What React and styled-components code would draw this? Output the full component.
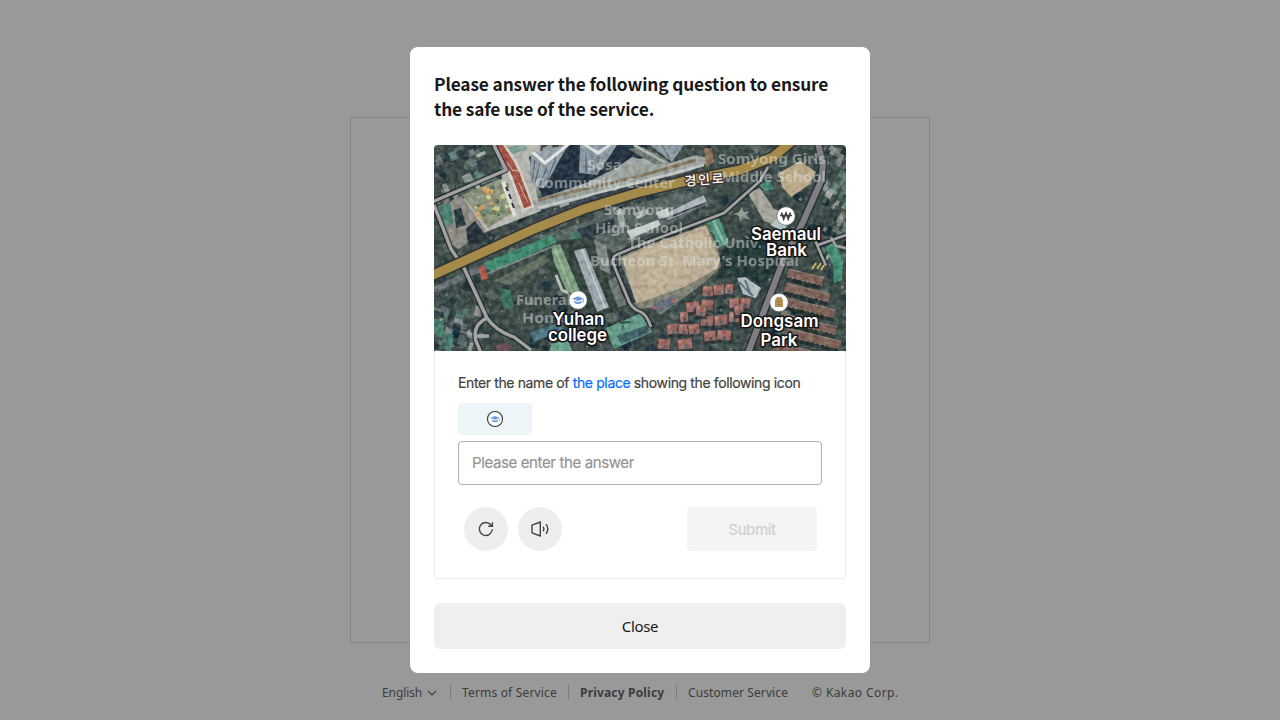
import React from 'react';
import styled, { createGlobalStyle } from 'styled-components';

const Global = createGlobalStyle`
  * { box-sizing: border-box; }
  body { margin: 0; background: #fff; overflow: hidden; }
  button, input { font: inherit; margin: 0; padding: 0; border: 0; }
`;

const Page = styled.div`
  height: 100vh;
  padding-top: 117px;
  display: flex;
  flex-direction: column;
  align-items: center;
  font-family: 'Noto Sans', 'Noto Sans CJK KR', sans-serif;
`;
const LoginCard = styled.main`
  width: 580px;
  height: 526px;
  border: 1px solid #ddd;
`;
const Footer = styled.footer`
  width: 516px;
  margin-top: 40px;
  height: 20px;
  display: flex;
  align-items: center;
  color: #666;
  font-size: 12px;
  line-height: 20px;
  white-space: nowrap;
`;
const FooterItem = styled.span`
  width: ${(p) => p.$w}px;
  margin-left: ${(p) => p.$gap || 0}px;
  font-weight: ${(p) => (p.$bold ? 700 : 400)};
  letter-spacing: ${(p) => p.$ls || 0}px;
  flex: none;
`;
const Divider = styled.i`
  width: 1px;
  height: 14px;
  margin: -2px 11px 0;
  background: #ccc;
  flex: none;
`;
const Chevron = styled.svg`
  width: 12px;
  height: 12px;
  margin-right: 1px;
  flex: none;
  fill: none;
  stroke: #666;
  stroke-width: 1.2;
`;

const Dim = styled.div`
  position: fixed;
  inset: 0;
  background: rgba(0, 0, 0, 0.4);
  display: flex;
  align-items: center;
  justify-content: center;
`;
const Dialog = styled.section`
  width: 460px;
  height: 626px;
  padding: 24px;
  background: #fff;
  border-radius: 8px;
`;
const Title = styled.h1`
  margin: 0;
  height: 74px;
  font: 700 17.3px/25px 'Noto Sans CJK KR', sans-serif;
  letter-spacing: -0.135px;
  color: #191919;
  white-space: nowrap;
`;
const Challenge = styled.div`
  height: 434px;
  border-radius: 4px;
  box-shadow: inset 0 0 0 1px #eee;
  overflow: hidden;
  font-family: Inter, sans-serif;
`;
const MapArt = styled.svg`
  display: block;
  width: 412px;
  height: 206px;
`;
const Form = styled.div`
  padding: 22px 24px 0;
`;
const Prompt = styled.p`
  margin: 0;
  font-size: 14px;
  line-height: 20px;
  letter-spacing: -0.375px;
  color: #424242;
  white-space: nowrap;
  -webkit-text-stroke: 0.2px currentColor;
`;
const Accent = styled.span`
  color: #0a6cff;
`;
const IconChip = styled.div`
  width: 74px;
  height: 32px;
  margin: 10px 0 6px;
  border-radius: 4px;
  background: #edf5f9;
  display: grid;
  place-items: center;
`;
const Answer = styled.input`
  display: block;
  width: 364px;
  height: 44px;
  padding: 0 13px 1px;
  border: 1px solid #b0b0b0;
  border-radius: 4px;
  font-size: 15px;
  letter-spacing: -0.38px;
  outline: 0;
  &::placeholder { color: #949494; opacity: 1; -webkit-text-stroke: 0.2px #949494; }
`;
const Actions = styled.div`
  display: flex;
  gap: 10px;
  padding: 22px 5px 0 6px;
`;
const RoundButton = styled.button`
  width: 44px;
  height: 44px;
  border-radius: 50%;
  background: #eee;
  display: grid;
  place-items: center;
`;
const Submit = styled.button`
  width: 130px;
  height: 44px;
  margin-left: auto;
  border-radius: 4px;
  background: #f4f4f4;
  color: #d0d0d0;
  font-size: 15px;
  font-weight: 500;
  letter-spacing: -0.45px;
`;
const Close = styled.button`
  display: block;
  width: 100%;
  height: 46px;
  margin-top: 24px;
  border-radius: 6px;
  background: #efefef;
  color: #191919;
  font-family: 'Noto Sans', sans-serif;
  font-size: 15px;
  letter-spacing: -0.3px;
`;

/* Deterministic scatter of roofs and tree crowns for the aerial ground. */
const scatter = (n, seed) => {
  let s = seed;
  const r = () => ((s = (s * 16807) % 2147483647) / 2147483647);
  return Array.from({ length: n }, () => [r(), r(), r(), r(), r()]);
};
const roofTints = ['#7f8b89', '#48776b', '#9ba29f', '#2b3a45', '#b5b9b3', '#59686d', '#1d2733', '#7d7974', '#64847b'];
const treeTints = ['#20343a', '#30433f', '#3e534b', '#152935', '#53645a', '#66706a'];

const redHomes = [
  [274, 146, 11], [285, 145, 11], [295, 144, 8], [259, 162, 14], [273, 160, 12], [301, 158, 12], [311, 158, 10], [250, 172, 8],
  [273, 176, 12], [287, 175, 13], [300, 172, 10], [276, 191, 12], [290, 190, 14],
  [239, 184, 12], [250, 184, 11], [260, 184, 11], [230, 199, 12], [251, 199, 14], [267, 166, 10], [305, 165, 9],
];
const rowHomes = [
  [355, 124, 36], [352, 138, 46], [353, 153, 50], [347, 168, 58], [353, 183, 56], [341, 197, 66],
];

function Cap({ x, y, s = 1 }) {
  return (
    <g transform={`translate(${x} ${y}) scale(${s})`} fill="#6c9be0">
      <path d="M-7-1.500 0-4.500 7-1.500 0 1.200Z" />
      <path d="M-4.300 1 0 2.600 4.300 1v2.200C2.200 5.200-2.200 5.200-4.300 3.200Z" />
      <path d="M5.800-1h1v4h-1z" />
    </g>
  );
}

function Ghost({ x, y, w, children }) {
  return (
    <text x={x} y={y} textLength={w} lengthAdjust="spacingAndGlyphs">{children}</text>
  );
}

function AerialMap() {
  return (
    <MapArt viewBox="0 0 412 206">
      <defs>
        <filter id="soft" x="0" y="0" width="100%" height="100%"><feGaussianBlur stdDeviation="0.6" /></filter>
        <filter id="grain" x="0" y="0" width="100%" height="100%" colorInterpolationFilters="sRGB">
          <feTurbulence type="fractalNoise" baseFrequency="0.2" numOctaves="3" seed="8" />
          <feColorMatrix values="1.800 0 0 0 -.35  1.800 0 0 0 -.35  1.800 0 0 0 -.35  0 0 0 0 1" />
        </filter>
      </defs>
      <g filter="url(#soft)">
        <rect width="412" height="206" fill="#3d4b49" />
        {scatter(420, 77).map(([a, b, c, d, e], i) => (
          <circle key={i} cx={a * 412} cy={b * 206} r={1.5 + c * 4.5} fill={treeTints[Math.floor(d * 6)]} opacity={0.5 + e * 0.5} />
        ))}
        {scatter(260, 4077).map(([a, b, c, d, e], i) => (
          <circle key={i} cx={a * 412} cy={b * 206} r={0.6 + c * 1.2} fill={['#8e9a8c', '#6f8a72', '#14242b', '#a09c8d'][Math.floor(d * 4)]} opacity={0.4 + e * 0.4} />
        ))}
        {scatter(150, 1234).map(([a, b, c, d, e], i) => (
          <rect key={i} x={a * 205} y={b * 80 - 4} width={3 + c * 8} height={3 + d * 6} fill={roofTints[Math.floor(e * 9)]} transform={`rotate(-24 ${a * 205} ${b * 80})`} opacity=".85" />
        ))}
        {scatter(35, 991).map(([a, b, c, d, e], i) => (
          <rect key={i} x={a * 45} y={155 + b * 52} width={3 + c * 7} height={3 + d * 7} fill={roofTints[Math.floor(e * 9)]} transform={`rotate(15 ${a * 45} ${155 + b * 52})`} opacity=".7" />
        ))}
        {scatter(60, 381).map(([a, b, c, d, e], i) => (
          <rect key={i} x={388 + a * 28} y={b * 110} width={3 + c * 7} height={4 + d * 6} fill={roofTints[Math.floor(e * 9)]} transform={`rotate(30 ${388 + a * 28} ${b * 110})`} opacity=".8" />
        ))}
        <path d="M288 104 320 92 345 98 345 122 330 138 305 130 282 134Z" fill="#1d3230" opacity=".7" />

        {/* plaza, playground and red lane */}
        <path d="M65 0h42l-6 42 6 24-58 22-20-34 39-20Z" fill="#b4b5af" />
        <path d="M72 2 90 0 94 4 79 9Z" fill="#79a091" />
        <path d="M3 62 28 51 52 86 24 104 12 96Z" fill="#8d8983" />
        <path d="M5 62 16 57 20 77 10 82Z" fill="#4a8071" />
        <path d="M20 65 27 63 32 80 22 83Z" fill="#273b3d" />
        <path d="M28 50 66 34 80 67 54 83Z" fill="#8d927d" />
        {scatter(55, 55).map(([a, b, c, d, e], i) => (
          <circle key={i} cx={38 + a * 35 + b * 5} cy={45 + b * 30 - a * 6} r={1 + c * 1.8} fill={['#d3a15f', '#66866a', '#c2c686', '#8d7e5f', '#93b78b', '#53685a'][Math.floor(e * 6)]} />
        ))}
        <path d="M64 0 76 18 82 30 94 64" stroke="#d5d1c8" strokeWidth="13" fill="none" />
        <path d="M64 0 76 18 82 30 94 62" stroke="#a05145" strokeWidth="8" fill="none" />
        <path d="M85 38 94 58M79 25l8 2M73 17l6 9" stroke="#cdb9a9" strokeWidth="1" />
        <path d="M69 37 81 71" stroke="#dfe0db" strokeWidth="4" />
        <path d="m72 42 2 4m1 3 2 5m1 4 2 5" stroke="#2c3334" strokeWidth="2" />
        <path d="M32 84 41 76 52 91 46 99 34 98Z" fill="#28313c" />

        {/* towers and service roads */}
        <path d="M95 12 135 0h78v38l-98 22-15-24Z" fill="#233240" />
        <path d="M97 9 112 4 134 0 110 43 95 38Z" fill="#919da4" />
        <path d="M97 8 111 20 136 0h-5l-20 16-10-9Z" fill="#e4e7e4" />
        <path d="M146 0h37l-20 30-18-2Z" fill="#8c99a2" />
        <path d="M149 0 164 10 178 0h-5l-9 6-10-6Z" fill="#d7dddb" />
        <path d="M216 0h34l-12 17Z" fill="#8c99a2" />
        <path d="M113 22 105 42M106 18l-5 20M101 15l-3 22M122 12l-9 24M152 8v19M158 11v18M165 12l-3 15M228 0l8 14" stroke="#52616d" strokeWidth="1" />
        <path d="M184 22 198 12 206 14 222 8 236 18 262 10 280 15 254 27 206 39 102 66 98 56 152 38Z" fill="#9da39e" />
        <path d="M194 4 210 2 236 17 222 20Z" fill="#6b7871" />
        <path d="M200 0 232 18" stroke="#b0b4ac" strokeWidth="3" />
        <path d="M104 55 206 31 262 15" stroke="#857861" strokeWidth="3" fill="none" />
        <path d="M104 63 206 37 270 20" stroke="#bfc5c3" strokeWidth="2.500" fill="none" />
        <path d="M270 3 278 3 280 17 272 22Z" fill="#8d725b" />
        <path d="M100 76 160 53 258 29" stroke="#3b454d" strokeWidth="6" fill="none" />
        <path d="M0 145 50 122 128 88 200 63" stroke="#626c70" strokeWidth="6" fill="none" />

        {/* school ground and surrounding buildings */}
        <path d="M104 92 250 45 280 56 206 94 186 102 115 110Z" fill="#566462" />
        <path d="M143 84 180 73 180 83 150 95Z" fill="#2d3b45" />
        <path d="M138 88 143 86 147 95 140 97Z" fill="#41806e" />
        <path d="M224 72 270 50 273 59 234 75Z" fill="#adb5b9" />
        <path d="M193 86 224 75 227 80 197 94Z" fill="#c2c8c7" />
        <path d="M222 67 234 63 236 70 225 74Z" fill="#c3c8c5" />
        <path d="M182 65l6-2 4 17-6 3ZM200 68l12-4 3 5-12 5Z" fill="#9ca6a5" />
        <path d="M228 75 272 58" stroke="#46515a" strokeWidth="2" />
        <path d="M184 113 210 101 272 80 284 102 287 122 270 138 226 170 220 162 200 165Z" fill="#7e8072" />
        <path d="M188 113 212 102 272 80 280 101 286 113 284 123 250 142 202 159Z" fill="#b9ab93" />
        <path d="M206 107 268 86 276 113 216 148Z" fill="#c0b39a" opacity=".7" />
        <path d="M184 116 200 158" stroke="#33414a" strokeWidth="4" />
        <path d="M273 77 285 73 295 97 286 102Z" fill="#4c8f79" />
        <path d="M279 75 291 100" stroke="#8bb1a2" strokeWidth="3" />
        <path d="M218 160 239 150 243 159 224 168Z" fill="#646d7b" />
        <path d="m219 162 4 2m14-9 4 2" stroke="#b1656a" strokeWidth="3" />

        {/* campus */}
        <path d="M104 98 160 92 185 165 165 170 140 160 118 130Z" fill="#35443f" />
        <path d="M60 136 110 110 116 116 76 140Z" fill="#606c60" />
        <path d="M50 118 118 90 123 97 57 128Z" fill="#40896f" />
        <path d="M50 130 122 100" stroke="#78827f" strokeWidth="2" />
        <path d="M44 123 50 120 54 133 48 136Z" fill="#ac584a" />
        <path d="M117 102 126 99 146 146 134 149 120 117Z" fill="#7c9d7e" />
        <path d="M121 104 138 147" stroke="#a2b69c" strokeWidth="2" />
        <path d="m122 130 6 15 6 3" stroke="#b7bfba" strokeWidth="3" fill="none" />
        <path d="M140 106 151 103 175 162 163 167Z" fill="#98a5ab" />
        <path d="M148 104 171 163" stroke="#c0c8c9" strokeWidth="2" />
        <path d="M160 95 172 100 177 130 166 124Z" fill="#7e8683" />
        <path d="M174 136 182 132 192 160 184 162Z" fill="#6b756f" />
        <path d="M65 143 76 145 80 162 70 165Z" fill="#3b6f59" />
        <path d="M95 188 124 178 129 184 101 197Z" fill="#4b7280" />
        <path d="M172 183 207 168 218 187 180 204Z" fill="#649a87" />
        <path d="M183 191 213 180 216 187 187 199Z" fill="#3e5f64" />
        <path d="M186 178 196 177M189 180l-1 5" stroke="#304d48" strokeWidth="2" />
        <path d="M117 199 134 195 138 206h-22Z" fill="#68a28d" />
        <path d="M62 200 72 197 79 203 76 208H62Z" fill="#644c53" />
        <path d="M0 174 10 177 9 191 0 188ZM13 187 20 190 17 206 10 203Z" fill="#437a6b" />

        {/* east side */}
        <path d="M345 28 366 16 382 27 376 39 357 52 348 42Z" fill="#b9a988" />
        <path d="M314 48 326 43 340 64 352 68 345 82 330 76Z" fill="#a3a298" />
        <path d="M336 80 345 71 353 79 350 87Z" fill="#b2c2bf" />
        <path d="m308 62 2 5 6-1-4 4 4 5-6-2-4 4-1-6-6-2 6-2Z" fill="#a4aaa0" opacity=".8" />
        <path d="M325 40 335 35 340 44 331 46Z" fill="#4b8a74" />
        <path d="M391 102 400 98 409 115 408 135 400 138 399 120Z" fill="#458d75" />
        <path d="M303 133 311 132 327 143 322 153 309 149Z" fill="#b2bcbe" />
        <path d="m305 137 14 14m-8-16 5 12" stroke="#56707c" strokeWidth="2" />
        {redHomes.map(([x, y, w], i) => (
          <g key={i} transform={`rotate(${i % 2 ? -6 : 5} ${x} ${y})`}>
            <rect x={x - w / 2 - 1} y={y - 4} width={w + 2} height="12" fill="#303b3e" />
            <rect x={x - w / 2} y={y - 5} width={w} height="10" fill="#9c6a62" />
            <rect x={x - w / 2 + 1} y={y - 4} width="3" height="3" fill="#b5837a" />
            <rect x={x - 1} y={y + 1} width="3" height="4" fill="#555f6b" />
          </g>
        ))}
        {rowHomes.map(([x, y, w], i) => (
          <g key={i} transform={`rotate(14 ${x} ${y})`}>
            <rect x={x} y={y} width={w} height="12" fill="#263231" />
            <rect x={x} y={y} width={w} height="8" fill="#7c6157" />
            <path d={`M${x} ${y}h${w}`} stroke="#95867b" />
            <path d={`M${x} ${y + 8}h${w}`} stroke="#8c8378" strokeDasharray="2 3" />
          </g>
        ))}
        <rect width="412" height="206" filter="url(#grain)" opacity=".35" style={{ mixBlendMode: 'soft-light' }} />

        {/* road network */}
        <g fill="none" strokeLinejoin="round">
          <g stroke="#20282b" strokeWidth="6" opacity=".75">
            <path d="M-2 57 72 25 59-2M0 60 17 104 30 123 53 173Q62 186 80 192L97 205M53 173Q38 180 42 196L47 208M182 110 206 100 290 68 326 36 334 22" />
            <path d="M384-2 389 20 387 36 369 77 349 116 314 208" strokeWidth="9" />
            <path d="M384 100 412 90M378 88 392 121" />
            <path d="M182 110Q177 112 181 123L194 154Q197 164 207 167 213 170 217 182" />
          </g>
          <g stroke="#a5a2a4" strokeWidth="3.400">
            <path d="M-2 57 72 25 59-2M0 60 17 104 30 123 53 173Q62 186 80 192L97 205M53 173Q38 180 42 196L47 208M42 191h13" />
            <path d="M182 110 206 100 290 68 326 36 334 22M182 110Q177 112 181 123L194 154Q197 164 207 167 213 170 217 182" strokeWidth="2.800" />
            <path d="M384 100 412 90M378 88 392 121M397 92l5 9 10 2" strokeWidth="2.500" />
          </g>
          <path d="M384-2 389 20 387 36 369 77 349 116 314 208" stroke="#817d84" strokeWidth="6" />
          <path d="M-3 131 65 100 100 84 150 64 206 47 256 35 306 25 339 12 358-4" stroke="#303332" strokeWidth="12" />
          <path d="M-3 131 65 100 100 84 150 64 206 47 256 35 306 25 339 12 358-4" stroke="#a48a4c" strokeWidth="9" />
        </g>
        <path d="m378 124 4-6m1 6 4-6m0 7 3-5" stroke="#d6b85e" strokeWidth="1.600" />
      </g>

      <g fontFamily="Noto Sans, sans-serif" fontSize="15" fontWeight="700" fill="#dfe3df" opacity=".47">
        <Ghost x="153" y="25" w="35">Sosa</Ghost>
        <Ghost x="101" y="43" w="140">Community Center</Ghost>
        <Ghost x="284" y="19" w="108">Somyong Girls</Ghost>
        <Ghost x="287" y="37" w="105">Middle School</Ghost>
        <Ghost x="170" y="70" w="70">Somyong</Ghost>
        <Ghost x="161" y="88" w="88">High School</Ghost>
        <Ghost x="194" y="103" w="134">The Catholic Univ.</Ghost>
        <Ghost x="156" y="121" w="209">Bucheon St. Mary's Hospital</Ghost>
        <Ghost x="82" y="160" w="55">Funeral</Ghost>
        <Ghost x="88" y="178" w="47">Home</Ghost>
      </g>
      <g fontFamily="Noto Sans CJK KR, sans-serif" fontSize="13" fontWeight="500" fill="#fff" stroke="#493b35" strokeWidth="2.500" paintOrder="stroke">
        <text x="251" y="41" textLength="39" transform="rotate(-5 251 41)">경인로</text>
      </g>
      <g fontFamily="Inter, sans-serif" fontSize="17" fontWeight="600" fill="#fff" stroke="#151515" strokeWidth="3" strokeLinejoin="round" paintOrder="stroke" textAnchor="middle">
        <text x="352" y="95" textLength="70">Saemaul</text>
        <text x="352.500" y="111" textLength="41">Bank</text>
        <text x="144.500" y="180" textLength="52">Yuhan</text>
        <text x="143.500" y="196" textLength="59">college</text>
        <text x="345.500" y="182" textLength="78">Dongsam</text>
        <text x="345" y="201" textLength="37">Park</text>
      </g>
      <g fill="#fff" stroke="#4b5555" strokeWidth=".6">
        <circle cx="352" cy="71" r="9.200" />
        <circle cx="144" cy="155" r="9.200" />
        <circle cx="345" cy="157.500" r="9.200" />
      </g>
      <path d="m347.500 67.500 2.200 6.500 2.300-6 2.300 6 2.200-6.500M346 70.500h12" fill="none" stroke="#424242" strokeWidth="1.700" />
      <Cap x={144} y={155} s={0.85} />
      <path d="M341 162v-7l2-3h4l2 3v7Z" fill="#b49153" />
      <path d="M343 157h4M343 159.500h4" stroke="#866b3d" strokeWidth=".7" />
    </MapArt>
  );
}

export default function App() {
  return (
    <>
      <Global />
      <Page>
        <LoginCard />
        <Footer>
          <FooterItem $w={44} $ls={-0.1}>English</FooterItem>
          <Chevron viewBox="0 0 12 12"><path d="m2 4 4 4 4-4" /></Chevron>
          <Divider />
          <FooterItem $w={95} $ls={0.17}>Terms of Service</FooterItem>
          <Divider />
          <FooterItem $w={85} $ls={0.18} $bold>Privacy Policy</FooterItem>
          <Divider />
          <FooterItem $w={100} $ls={0.1}>Customer Service</FooterItem>
          <FooterItem $w={87} $gap={24} $ls={0.4}>© Kakao Corp.</FooterItem>
        </Footer>
      </Page>
      <Dim>
        <Dialog role="dialog">
          <Title>Please answer the following question to ensure<br />the safe use of the service.</Title>
          <Challenge>
            <AerialMap />
            <Form>
              <Prompt>Enter the name of <Accent>the place</Accent> showing the following icon</Prompt>
              <IconChip>
                <svg width="18" height="18" viewBox="0 0 18 18">
                  <circle cx="9" cy="9" r="7.500" fill="#fff" stroke="#333" strokeWidth="1.100" />
                  <Cap x={9} y={9} s={0.68} />
                </svg>
              </IconChip>
              <Answer placeholder="Please enter the answer" />
              <Actions>
                <RoundButton aria-label="Refresh">
                  <svg width="20" height="20" viewBox="0 0 20 20" fill="none" stroke="#444" strokeWidth="1.400">
                    <path d="M16.300 10.300A6.500 6.500 0 1 1 14.800 5.800L16.200 7.200" />
                    <path d="M16.400 3.200v4.100h-4.200" />
                  </svg>
                </RoundButton>
                <RoundButton aria-label="Listen">
                  <svg width="20" height="20" viewBox="0 0 20 20" fill="none" stroke="#444" strokeWidth="1.400" strokeLinejoin="round">
                    <path d="M2 6.200 10.300 3v14L2 13.800Z" />
                    <path d="M13 7.600q1.800 2.400 0 4.800M16 5.200q3.600 4.800 0 9.600" />
                  </svg>
                </RoundButton>
                <Submit>Submit</Submit>
              </Actions>
            </Form>
          </Challenge>
          <Close>Close</Close>
        </Dialog>
      </Dim>
    </>
  );
}
